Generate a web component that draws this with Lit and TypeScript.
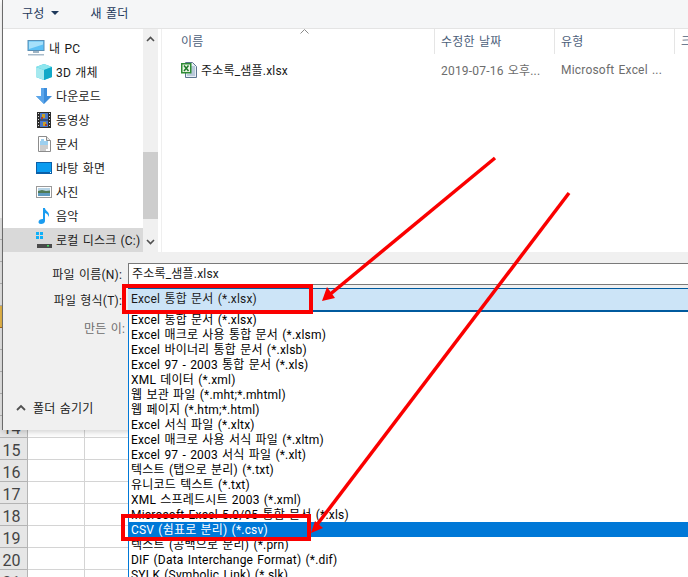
import { LitElement, html, css, svg } from "lit";
import { customElement } from "lit/decorators.js";

const icons: Record<string, unknown> = {
  pc: svg`<svg width="18" height="16" viewBox="0 0 18 16"><rect x="1" y="0.5" width="16" height="10" fill="#5cc0f5" stroke="#5a8fb5"/><path d="M2 1.5h14v3L2 9z" fill="#a6e0fb"/><rect x="6" y="11" width="6" height="2" fill="#9fb4c4"/><rect x="1" y="14" width="16" height="1.5" fill="#a9bccb"/></svg>`,
  cube: svg`<svg width="16" height="16" viewBox="0 0 16 16"><path d="M8 0l8 3v10l-8 3-8-3V3z" fill="#2bc4d8"/><path d="M0 3l8 3 8-3-8-3z" fill="#8fe6ee"/><path d="M0 3l8 3v10l-8-3z" fill="#a5e9ef"/><path d="M8 6l8-3v10l-8 3z" fill="#12a9c8"/></svg>`,
  down: svg`<svg width="16" height="16" viewBox="0 0 16 16"><path d="M5 0h6v8h5l-8 8-8-8h5z" fill="#3d8ddb"/><path d="M5 0h3v16L0 8h5z" fill="#5aa5ea"/></svg>`,
  film: svg`<svg width="14" height="16" viewBox="0 0 14 16"><rect width="14" height="16" fill="#2c2c2c"/><rect x="3" y="1" width="8" height="6.5" fill="#4a78c8"/><rect x="3" y="8.5" width="8" height="6.5" fill="#4a78c8"/><path d="M5 2h3v4H5zM6 10h3v4H6z" fill="#c8a028"/><path d="M4 5h2v2H4zM8 12h2v2H8z" fill="#b04030"/><path d="M1 1h1v1H1zM1 4h1v1H1zM1 7h1v1H1zM1 10h1v1H1zM1 13h1v1H1zM12 1h1v1h-1zM12 4h1v1h-1zM12 7h1v1h-1zM12 10h1v1h-1zM12 13h1v1h-1z" fill="#ddd"/></svg>`,
  doc: svg`<svg width="13" height="16" viewBox="0 0 13 16"><path d="M.5.5h8l4 4v11H.5z" fill="#fff" stroke="#8c8c8c"/><path d="M8.5.5v4h4" fill="#e5e5e5" stroke="#8c8c8c"/><path d="M3 4h3M2 6h8M2 8h8" stroke="#3aa0e0"/><path d="M2 10h8M2 12h8M2 14h6" stroke="#9a9a9a"/></svg>`,
  desk: svg`<svg width="16" height="12" viewBox="0 0 16 12"><rect x="0.5" y="0.5" width="15" height="11" fill="#0a9cf0" stroke="#0a5fa8"/><path d="M1 11h14v-1H1z" fill="#0a5fa8"/><rect x="14" y="10" width="1" height="1" fill="#fff"/></svg>`,
  pic: svg`<svg width="16" height="12" viewBox="0 0 16 12"><rect x="0.5" y="0.5" width="15" height="11" fill="#fff" stroke="#9a9a9a"/><rect x="2" y="2" width="12" height="4" fill="#b7d4e6"/><path d="M2 5l4-1 4 1 4-.5V7H2z" fill="#4f7a55"/><rect x="2" y="7" width="12" height="3" fill="#5f9bc0"/></svg>`,
  music: svg`<svg width="12" height="16" viewBox="0 0 12 16"><path d="M5 0h2c0 3 4 3.5 4 7 0 .8-.2 1.500-.5 2 0-2.500-2-3.500-3.500-4v8c0 1.800-2 3-4 3-1.700 0-2.500-1-2.500-2 0-1.700 2-3 4-3 .2 0 .4 0 .5 0z" fill="#1a9cf0"/></svg>`,
  drive: svg`<svg width="16" height="16" viewBox="0 0 16 16"><path d="M0 0h3v3H0zM4 0h3v3H4zM0 4h3v3H0zM4 4h3v3H4z" fill="#10b0f8"/><path d="M2 10h12l2 2v3H1v-3z" fill="#d8d8d8"/><rect x="1" y="12" width="15" height="4" fill="#4a4a4a"/><rect x="11" y="13" width="2" height="1.500" fill="#40e060"/></svg>`,
  xls: svg`<svg width="16" height="16" viewBox="0 0 16 16"><path d="M4.500 .5h7l4 4v11h-11z" fill="#e8eef6" stroke="#5c7590"/><path d="M9 5h5M9 7h5M9 9h5M9 11h5M6 13h8" stroke="#8aa5c0"/><rect x="0" y="1" width="10.500" height="10.500" fill="#2e8b35"/><rect x="1.500" y="2.500" width="7.500" height="7.500" fill="#eaf4e4"/><path d="M3 3.500l4.500 5.500M7.500 3.500L3 9" stroke="#1e7a2a" stroke-width="1.500"/></svg>`,
};

const NAV = [
  { label: "내 PC", icon: "pc", top: true },
  { label: "3D 개체", icon: "cube" },
  { label: "다운로드", icon: "down" },
  { label: "동영상", icon: "film" },
  { label: "문서", icon: "doc" },
  { label: "바탕 화면", icon: "desk" },
  { label: "사진", icon: "pic" },
  { label: "음악", icon: "music" },
  { label: "로컬 디스크 (C:)", icon: "drive", sel: true },
];

const TYPES = [
  "Excel 통합 문서 (*.xlsx)",
  "Excel 매크로 사용 통합 문서 (*.xlsm)",
  "Excel 바이너리 통합 문서 (*.xlsb)",
  "Excel 97 - 2003 통합 문서 (*.xls)",
  "XML 데이터 (*.xml)",
  "웹 보관 파일 (*.mht;*.mhtml)",
  "웹 페이지 (*.htm;*.html)",
  "Excel 서식 파일 (*.xltx)",
  "Excel 매크로 사용 서식 파일 (*.xltm)",
  "Excel 97 - 2003 서식 파일 (*.xlt)",
  "텍스트 (탭으로 분리) (*.txt)",
  "유니코드 텍스트 (*.txt)",
  "XML 스프레드시트 2003 (*.xml)",
  "Microsoft Excel 5.0/95 통합 문서 (*.xls)",
  "CSV (쉼표로 분리) (*.csv)",
  "텍스트 (공백으로 분리) (*.prn)",
  "DIF (Data Interchange Format) (*.dif)",
  "SYLK (Symbolic Link) (*.slk)",
];

const ROWS = Array.from({ length: 17 }, (_, i) => i + 5);
const CELLS = Array.from({ length: 11 }, (_, i) => i);

@customElement("app-root")
export class AppRoot extends LitElement {
  static styles = css`
    :host {
      display: block;
      position: relative;
      width: 688px;
      height: 577px;
      overflow: hidden;
      background: #fff;
      font-family: Roboto, "Noto Sans CJK KR", sans-serif;
      font-size: 12px;
      letter-spacing: 0.2px;
      word-spacing: 1px;
      color: #1a1a1a;
    }
    .sheet { padding-top: 218px; }
    .row { display: flex; height: 22px; box-sizing: border-box; }
    .head {
      width: 28px; flex: none; box-sizing: border-box;
      background: #e6e6e6; border-bottom: 1px solid #b4b4b4; border-right: 1px solid #b4b4b4;
      font-size: 16px; line-height: 25px; color: #444; text-align: center; padding-right: 4px; letter-spacing: 0;
    }
    .row.sel .head { background: #e8b84a; border-bottom-color: #a86a20; }
    .cell { width: 57px; flex: none; box-sizing: border-box; border-right: 1px solid #d4d4d4; border-bottom: 1px solid #d4d4d4; }

    .dialog {
      position: absolute; left: 2px; top: 0; right: 0; height: 430px;
      display: flex; flex-direction: column; box-sizing: border-box;
      background: #f0f0f0; border-left: 1px solid #6b6b6b;
      box-shadow: 0 2px 6px rgba(0,0,0,.18);
    }
    .toolbar {
      height: 29px; flex: none; box-sizing: border-box;
      display: flex; align-items: center; padding: 0 0 4px 19px;
      background: #f5f6f7; border-bottom: 1px solid #e4e4e4; color: #1e395b;
    }
    .caret { width: 0; height: 0; border: 4px solid transparent; border-top: 4px solid #1e395b; border-bottom: 0; margin: 2px 0 0 7px; }
    .newf { margin-left: 31px; }

    .main { height: 223px; flex: none; display: flex; background: #fff; }
    .nav { width: 140px; flex: none; padding-top: 7px; box-sizing: border-box; overflow: hidden; }
    .item { height: 24px; display: flex; align-items: center; padding-left: 33px; white-space: nowrap; color: #1a1a1a; }
    .item.top { padding-left: 24px; }
    .item.sel { background: #d9d9d9; }
    .item > span:last-child { padding-bottom: 2px; }
    .ico { width: 16px; flex: none; display: flex; justify-content: center; align-items: center; margin-right: 4px; }
    .item.top .ico { width: 18px; margin-right: 4px; }
    .bar { width: 15px; flex: none; background: #f0f0f0; display: flex; flex-direction: column; align-items: center; position: relative; }
    .track { flex: 1; width: 100%; padding-top: 123px; box-sizing: border-box; }
    .thumb { height: 67px; background: #cdcdcd; }
    .up { position: absolute; top: 7px; left: 3px; }
    .dn { position: absolute; bottom: 7px; left: 3px; }
    .list { flex: 1; min-width: 0; margin-left: 3px; border-left: 1px solid #efefef; position: relative; overflow: hidden; }
    .hdr { display: flex; height: 25px; align-items: center; color: #4c607a; position: relative; white-space: nowrap; }
    .hdr > div { height: 25px; line-height: 27px; box-sizing: border-box; padding-left: 6px; border-right: 1px solid #e5e5e5; flex: none; }
    .hdr > .c1 { width: 273px; padding-left: 19px; }
    .c2 { width: 120px; }
    .c3 { width: 120px; }
    .sort { position: absolute; left: 138px; top: 0; }
    .file { display: flex; height: 22px; margin-top: 5px; align-items: center; white-space: nowrap; }
    .file span, .f2, .f3 { padding-bottom: 1px; }
    .f1 { width: 273px; padding-left: 19px; box-sizing: border-box; display: flex; align-items: center; gap: 4px; }
    .f2 { width: 120px; padding-left: 6px; box-sizing: border-box; color: #6d6d6d; }
    .f3 { width: 120px; padding-left: 6px; box-sizing: border-box; color: #6d6d6d; }

    .form { flex: 1; display: flex; flex-direction: column; padding-top: 11px; position: relative; }
    .frow { display: flex; align-items: center; }
    .lab { width: 119px; flex: none; text-align: right; margin-right: 6px; white-space: nowrap; color: #1a1a1a; padding-bottom: 2px; box-sizing: border-box; }
    .input { flex: 1; height: 22px; box-sizing: border-box; background: #fff; border: 1px solid #7a7a7a; border-right: 0; line-height: 20px; padding-left: 3px; }
    .r2 { margin-top: 3px; position: relative; }
    .combo { flex: 1; height: 24px; box-sizing: border-box; background: #cce4f7; border-top: 1px solid #005a9e; border-bottom: 2px solid #005a9e; line-height: 21px; padding-left: 3px; }
    .drop {
      position: absolute; left: 125px; right: 0; top: 24px;
      background: #fff; border-left: 1px solid #0078d7; box-sizing: border-box;
    }
    .opt { height: 15px; line-height: 17px; padding-left: 2px; white-space: nowrap; color: #000; }
    .opt.on { background: #0078d7; color: #fff; }
    .r3 { margin-top: 4px; height: 24px; }
    .r3 .lab { color: #6d6d6d; width: 122px; margin-right: 0; }
    .foot { margin-top: auto; display: flex; align-items: center; padding: 0 0 14px 13px; gap: 7px; color: #1a1a1a; }

    .marks { position: absolute; left: 0; top: 0; pointer-events: none; }
  `;

  render() {
    return html`
      <div class="sheet">
        ${ROWS.map(
          (n) => html`<div class="row ${n === 9 ? "sel" : ""}">
            <div class="head">${n}</div>
            ${CELLS.map(() => html`<div class="cell"></div>`)}
          </div>`
        )}
      </div>

      <div class="dialog">
        <div class="toolbar">
          <span>구성</span><span class="caret"></span><span class="newf">새 폴더</span>
        </div>
        <div class="main">
          <div class="nav">
            ${NAV.map(
              (n) => html`<div class="item ${n.top ? "top" : ""} ${n.sel ? "sel" : ""}">
                <span class="ico">${icons[n.icon]}</span><span>${n.label}</span>
              </div>`
            )}
          </div>
          <div class="bar">
            <div class="track"><div class="thumb"></div></div>
            <svg class="up" width="9" height="6" viewBox="0 0 9 6"><path d="M1 5l3.500-3.500L8 5" fill="none" stroke="#505050" stroke-width="1.600"/></svg>
            <svg class="dn" width="9" height="6" viewBox="0 0 9 6"><path d="M1 1l3.500 3.500L8 1" fill="none" stroke="#505050" stroke-width="1.600"/></svg>
          </div>
          <div class="list">
            <div class="hdr">
              <div class="c1">이름</div>
              <div class="c2">수정한 날짜</div>
              <div class="c3">유형</div>
              <div>크기</div>
              <svg class="sort" width="9" height="5" viewBox="0 0 9 5"><path d="M.5 4.500l4-4 4 4" fill="none" stroke="#8a8a8a"/></svg>
            </div>
            <div class="file">
              <div class="f1">${icons.xls}<span>주소록_샘플.xlsx</span></div>
              <div class="f2">2019-07-16 오후...</div>
              <div class="f3">Microsoft Excel ...</div>
            </div>
          </div>
        </div>
        <div class="form">
          <div class="frow">
            <div class="lab">파일 이름(N):</div>
            <div class="input">주소록_샘플.xlsx</div>
          </div>
          <div class="frow r2">
            <div class="lab">파일 형식(T):</div>
            <div class="combo">Excel 통합 문서 (*.xlsx)</div>
            <div class="drop">
              ${TYPES.map((t, i) => html`<div class="opt ${i === 14 ? "on" : ""}">${t}</div>`)}
            </div>
          </div>
          <div class="frow r3"><div class="lab">만든 이:</div></div>
          <div class="foot">
            <svg width="10" height="7" viewBox="0 0 10 7"><path d="M1 6l4-4 4 4" fill="none" stroke="#505050" stroke-width="1.800"/></svg>
            <span>폴더 숨기기</span>
          </div>
        </div>
      </div>

      <svg class="marks" width="688" height="577" viewBox="0 0 688 577">
        <rect x="124" y="286" width="187" height="26" fill="none" stroke="#fa0000" stroke-width="4"/>
        <rect x="123" y="516" width="186" height="23" fill="none" stroke="#fa0000" stroke-width="4"/>
        <path d="M495 158L328 296" stroke="#fa0000" stroke-width="3.500" fill="none"/>
        <path d="M322 301l5-14 8 11z" fill="#fa0000"/>
        <path d="M569 193L316 526" stroke="#fa0000" stroke-width="3.500" fill="none"/>
        <path d="M311 533l4-12 8 7z" fill="#fa0000"/>
      </svg>
    `;
  }
}
